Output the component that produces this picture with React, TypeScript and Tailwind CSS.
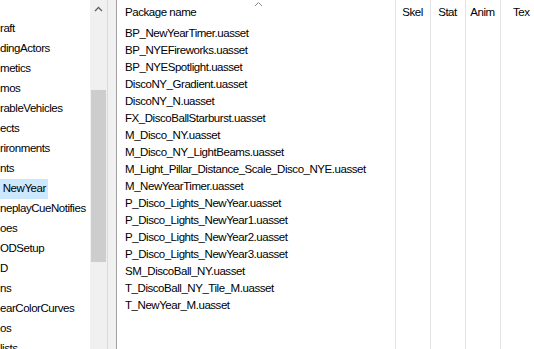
import React from "react";

const tree = [
  "raft",
  "dingActors",
  "metics",
  "mos",
  "rableVehicles",
  "ects",
  "rironments",
  "nts",
  " NewYear",
  "neplayCueNotifies",
  "oes",
  "ODSetup",
  "D",
  "ns",
  "earColorCurves",
  "os",
  "lists",
];

const files = [
  "BP_NewYearTimer.uasset",
  "BP_NYEFireworks.uasset",
  "BP_NYESpotlight.uasset",
  "DiscoNY_Gradient.uasset",
  "DiscoNY_N.uasset",
  "FX_DiscoBallStarburst.uasset",
  "M_Disco_NY.uasset",
  "M_Disco_NY_LightBeams.uasset",
  "M_Light_Pillar_Distance_Scale_Disco_NYE.uasset",
  "M_NewYearTimer.uasset",
  "P_Disco_Lights_NewYear.uasset",
  "P_Disco_Lights_NewYear1.uasset",
  "P_Disco_Lights_NewYear2.uasset",
  "P_Disco_Lights_NewYear3.uasset",
  "SM_DiscoBall_NY.uasset",
  "T_DiscoBall_NY_Tile_M.uasset",
  "T_NewYear_M.uasset",
];

export default function App() {
  return (
    <div className="w-[534px] h-[349px] flex bg-white overflow-hidden font-['Liberation_Sans',Arial,sans-serif] text-[11.5px] tracking-[-0.45px] text-black leading-none">
      {/* tree */}
      <div className="w-[90px] shrink-0 flex flex-col pt-[19px] overflow-hidden">
        {tree.map((t, i) => (
          <div key={i} className="h-[20px] shrink-0 flex items-center whitespace-pre">
            {i === 8 ? (
              <span className="h-[20px] w-[48px] flex items-center bg-[#cce8ff] whitespace-pre">{t}</span>
            ) : (
              <span>{t}</span>
            )}
          </div>
        ))}
      </div>
      {/* scrollbar */}
      <div className="w-[17px] shrink-0 bg-[#f0f0f0] flex flex-col">
        <div className="h-[17px] flex items-center justify-center">
          <svg width="9" height="6" viewBox="0 0 9 6">
            <path d="M1 5 L4.5 1.5 L8 5" stroke="#606060" strokeWidth="1.3" fill="none" />
          </svg>
        </div>
        <div className="h-[73px]" />
        <div className="h-[172px] mx-[1px] bg-[#cdcdcd]" />
      </div>
      {/* splitter */}
      <div className="w-[10px] shrink-0 bg-[#f0f0f0] border-l border-[#dadada] border-r border-r-[#a0a0a0]" />
      {/* list */}
      <div className="flex-1 flex flex-col relative">
        <div className="h-[25px] shrink-0 flex">
          <div className="w-[278px] shrink-0 relative flex items-center pl-[8px]">
            <span>Package name</span>
            <svg className="absolute left-[137px] top-[1px]" width="9" height="6" viewBox="0 0 9 6">
              <path d="M1 5 L4.5 1.5 L8 5" stroke="#8a8a8a" strokeWidth="1" fill="none" />
            </svg>
          </div>
          <div className="w-[35px] shrink-0 flex items-center justify-center">Skel</div>
          <div className="w-[35px] shrink-0 flex items-center justify-center">Stat</div>
          <div className="w-[35px] shrink-0 flex items-center justify-center">Anim</div>
          <div className="flex-1 flex items-center pl-[13px]">Tex</div>
        </div>
        <div className="flex flex-col">
          {files.map((f) => (
            <div key={f} className="h-[17px] shrink-0 flex items-center pl-[8px] whitespace-nowrap">
              {f}
            </div>
          ))}
        </div>
        <div className="absolute top-0 bottom-0 left-[278px] w-px bg-[#e5e5e5]" />
        <div className="absolute top-0 bottom-0 left-[313px] w-px bg-[#e5e5e5]" />
        <div className="absolute top-0 bottom-0 left-[348px] w-px bg-[#e5e5e5]" />
        <div className="absolute top-0 bottom-0 left-[383px] w-px bg-[#e5e5e5]" />
      </div>
    </div>
  );
}
